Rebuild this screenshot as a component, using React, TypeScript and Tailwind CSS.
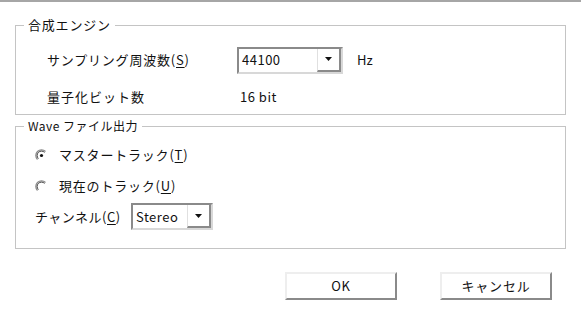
import React from 'react';

const font = { fontFamily: '"Noto Sans CJK JP", "Liberation Sans", sans-serif' };

function Combo({ value, width }: { value: string; width: string }) {
  return (
    <div
      className={`flex h-[27px] items-stretch border-2 border-t-[#8a8a8a] border-l-[#8a8a8a] border-r-[#d8d8d8] border-b-[#d8d8d8] bg-white ${width}`}
    >
      <div className="flex flex-1 items-center pl-[3px] text-[13px] tracking-[0.5px] text-[#111]">{value}</div>
      <div className="flex w-[24px] items-center justify-center border-r-2 border-b-2 border-[#8a8a8a] border-l border-l-[#e0e0e0]">
        <svg width="7" height="4" viewBox="0 0 7 4">
          <path d="M0 0h7L3.5 4z" fill="#111" />
        </svg>
      </div>
    </div>
  );
}

function Radio({ checked }: { checked?: boolean }) {
  return (
    <svg width="13" height="13" viewBox="0 0 13 13">
      <path d="M10.5 2.5A5.5 5.5 0 0 0 2.5 10.5" fill="none" stroke="#8a8a8a" strokeWidth="1.3" />
      <path d="M9.6 3.4A4.3 4.3 0 0 0 3.4 9.6" fill="none" stroke="#444" strokeWidth="1" />
      {checked && <circle cx="6.5" cy="6.5" r="1.6" fill="#111" />}
    </svg>
  );
}

function Button({ label }: { label: string }) {
  return (
    <button
      type="button"
      className="box-border flex h-[28px] w-[112px] items-center justify-center border-2 border-t-[#eeeeee] border-l-[#eeeeee] border-r-[#8a8a8a] border-b-[#8a8a8a] bg-white text-[13px] tracking-[0.8px] text-[#111]"
    >
      {label}
    </button>
  );
}

export default function App() {
  return (
    <div className="h-[315px] w-[581px] overflow-hidden border-t-2 border-[#a6a6a6] bg-white text-[#111]" style={font}>
      <fieldset className="mx-[15px] mt-[14px] border border-[#c4c4c4] p-0 pb-[7px] pl-[31px]">
        <legend className="ml-[-23px] px-[4px] text-[13px] leading-[18px] tracking-[0.8px]">合成エンジン</legend>
        <div className="mt-[13px] flex h-[26px] items-center">
          <span className="w-[190px] text-[13px] tracking-[0.8px]">
            サンプリング周波数(<span className="underline underline-offset-2">S</span>)
          </span>
          <Combo value="44100" width="w-[106px]" />
          <span className="ml-[14px] text-[13px]">Hz</span>
        </div>
        <div className="mt-[14px] flex h-[20px] items-center">
          <span className="w-[193px] text-[13px] tracking-[1px]">量子化ビット数</span>
          <span className="text-[13px] tracking-[0.5px]">16 bit</span>
        </div>
      </fieldset>

      <fieldset className="mx-[15px] mt-[2px] border border-[#c4c4c4] p-0 pb-[18px] pl-[19px]">
        <legend className="ml-[-11px] px-[4px] text-[12px] leading-[18px] tracking-[0.5px]">Wave ファイル出力</legend>
        <div className="mt-[10px] flex h-[20px] items-center gap-[11px]">
          <Radio checked />
          <span className="text-[13px] tracking-[0.8px]">
            マスタートラック(<span className="underline underline-offset-2">T</span>)
          </span>
        </div>
        <div className="mt-[11px] flex h-[20px] items-center gap-[11px]">
          <Radio />
          <span className="text-[13px] tracking-[0.8px]">
            現在のトラック(<span className="underline underline-offset-2">U</span>)
          </span>
        </div>
        <div className="mt-[7px] flex h-[27px] items-center">
          <span className="w-[96px] text-[13px] tracking-[0.5px]">
            チャンネル(<span className="underline underline-offset-2">C</span>)
          </span>
          <Combo value="Stereo" width="w-[82px]" />
        </div>
      </fieldset>

      <div className="mt-[23px] flex justify-end gap-[43px] pr-[29px]">
        <Button label="OK" />
        <Button label="キャンセル" />
      </div>
    </div>
  );
}
